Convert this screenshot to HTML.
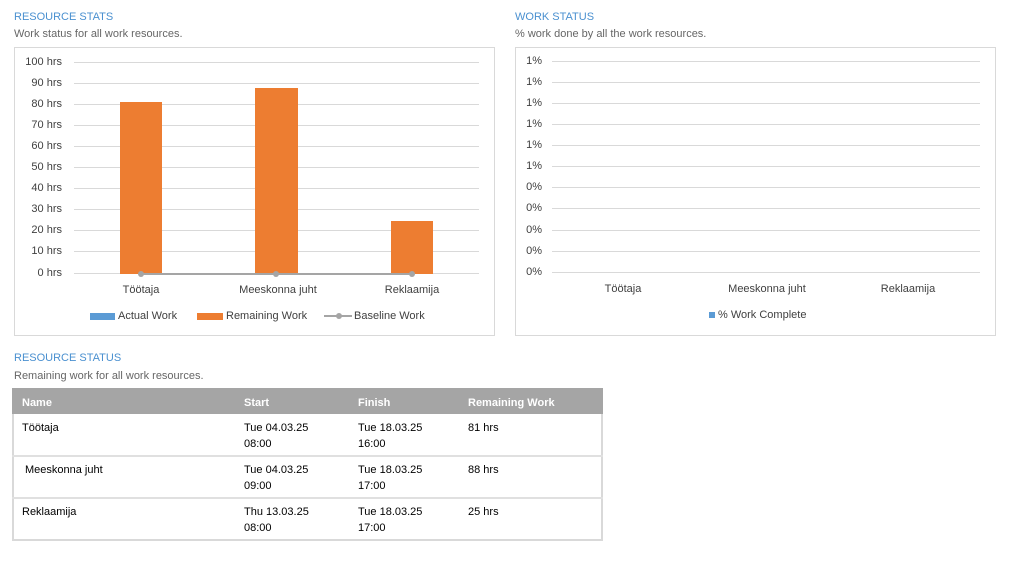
<!DOCTYPE html>
<html><head><meta charset="utf-8"><style>
body{margin:0;width:1017px;height:577px;background:#fff;font-family:"Liberation Sans",sans-serif;position:relative;overflow:hidden}
.a{position:absolute;white-space:nowrap}
.t{font-size:11px;color:#4a90d0}
.s{font-size:11px;color:#666}
.box{position:absolute;border:1px solid #d9d9d9;box-sizing:border-box}
.g{position:absolute;height:1px;background:#d9d9d9}
.yl{position:absolute;font-size:11px;color:#404040;text-align:right;width:50px}
.xl{position:absolute;font-size:11px;color:#404040;text-align:center;width:120px}
.bar{position:absolute;background:#ed7d31}
.td{position:absolute;font-size:11px;color:#000;line-height:16px}
</style></head><body>
<div class="a t" style="left:14px;top:11px">RESOURCE STATS</div>
<div class="a s" style="left:14px;top:28px">Work status for all work resources.</div>
<div class="box" style="left:14px;top:47px;width:481px;height:289px"></div>

<div class="a t" style="left:515px;top:11px">WORK STATUS</div>
<div class="a s" style="left:515px;top:28px">% work done by all the work resources.</div>
<div class="box" style="left:515px;top:47px;width:481px;height:289px"></div>

<div id="l"></div>
<script>
var h='';
var ys=[62,83,104,125,146,167,188,209,230,251,273];
for(var i=0;i<11;i++){var y=ys[i];h+='<div class="g" style="left:74px;width:405px;top:'+y+'px"></div>';
h+='<div class="yl" style="left:12px;top:'+(y-6)+'px">'+(100-i*10)+' hrs</div>';}
var ys2=[61,82,103,124,145,166,187,208,230,251,272];
var p=['1%','1%','1%','1%','1%','1%','0%','0%','0%','0%','0%'];
for(var i=0;i<11;i++){var y=ys2[i];h+='<div class="g" style="left:552px;width:428px;top:'+y+'px"></div>';
h+='<div class="yl" style="left:492px;top:'+(y-6)+'px">'+p[i]+'</div>';}
document.getElementById('l').innerHTML=h;
</script>
<div class="bar" style="left:120px;top:102px;width:42px;height:172px"></div>
<div class="bar" style="left:255px;top:88px;width:43px;height:186px"></div>
<div class="bar" style="left:391px;top:221px;width:42px;height:53px"></div>
<div class="a" style="left:141px;top:273px;width:271px;height:2px;background:#a5a5a5"></div>
<div class="a" style="left:138px;top:271px;width:6px;height:6px;border-radius:50%;background:#a5a5a5"></div>
<div class="a" style="left:273px;top:271px;width:6px;height:6px;border-radius:50%;background:#a5a5a5"></div>
<div class="a" style="left:409px;top:271px;width:6px;height:6px;border-radius:50%;background:#a5a5a5"></div>
<div class="xl" style="left:81px;top:284px">Töötaja</div>
<div class="xl" style="left:218px;top:284px">Meeskonna juht</div>
<div class="xl" style="left:352px;top:284px">Reklaamija</div>
<div class="a" style="left:90px;top:313px;width:25px;height:7px;background:#5b9bd5"></div>
<div class="a" style="left:118px;top:310px;font-size:11px;color:#404040">Actual Work</div>
<div class="a" style="left:197px;top:313px;width:26px;height:7px;background:#ed7d31"></div>
<div class="a" style="left:226px;top:310px;font-size:11px;color:#404040">Remaining Work</div>
<div class="a" style="left:324px;top:315px;width:28px;height:2px;background:#a5a5a5"></div>
<div class="a" style="left:336px;top:313px;width:6px;height:6px;border-radius:50%;background:#a5a5a5"></div>
<div class="a" style="left:354px;top:310px;font-size:11px;color:#404040">Baseline Work</div>

<div class="xl" style="left:563px;top:283px">Töötaja</div>
<div class="xl" style="left:707px;top:283px">Meeskonna juht</div>
<div class="xl" style="left:848px;top:283px">Reklaamija</div>
<div class="a" style="left:709px;top:312px;width:6px;height:6px;background:#5b9bd5"></div>
<div class="a" style="left:718px;top:309px;font-size:11px;color:#404040">% Work Complete</div>

<div class="a t" style="left:14px;top:352px">RESOURCE STATUS</div>
<div class="a s" style="left:14px;top:370px">Remaining work for all work resources.</div>
<div class="box" style="left:12px;top:388px;width:591px;height:153px;border:2px solid #d9d9d9"></div>
<div class="a" style="left:12px;top:388px;width:591px;height:26px;background:#a5a5a5"></div>
<div class="a" style="left:12px;top:455px;width:591px;height:2px;background:#e0e0e0"></div>
<div class="a" style="left:12px;top:497px;width:591px;height:2px;background:#e0e0e0"></div>
<div class="td" style="left:22px;top:395px;color:#fff;font-weight:bold">Name</div>
<div class="td" style="left:244px;top:395px;color:#fff;font-weight:bold">Start</div>
<div class="td" style="left:358px;top:395px;color:#fff;font-weight:bold">Finish</div>
<div class="td" style="left:468px;top:395px;color:#fff;font-weight:bold">Remaining Work</div>

<div class="td" style="left:22px;top:420px">Töötaja</div>
<div class="td" style="left:244px;top:420px">Tue 04.03.25<br>08:00</div>
<div class="td" style="left:358px;top:420px">Tue 18.03.25<br>16:00</div>
<div class="td" style="left:468px;top:420px">81 hrs</div>

<div class="td" style="left:25px;top:462px">Meeskonna juht</div>
<div class="td" style="left:244px;top:462px">Tue 04.03.25<br>09:00</div>
<div class="td" style="left:358px;top:462px">Tue 18.03.25<br>17:00</div>
<div class="td" style="left:468px;top:462px">88 hrs</div>

<div class="td" style="left:22px;top:504px">Reklaamija</div>
<div class="td" style="left:244px;top:504px">Thu 13.03.25<br>08:00</div>
<div class="td" style="left:358px;top:504px">Tue 18.03.25<br>17:00</div>
<div class="td" style="left:468px;top:504px">25 hrs</div>
</body></html>
